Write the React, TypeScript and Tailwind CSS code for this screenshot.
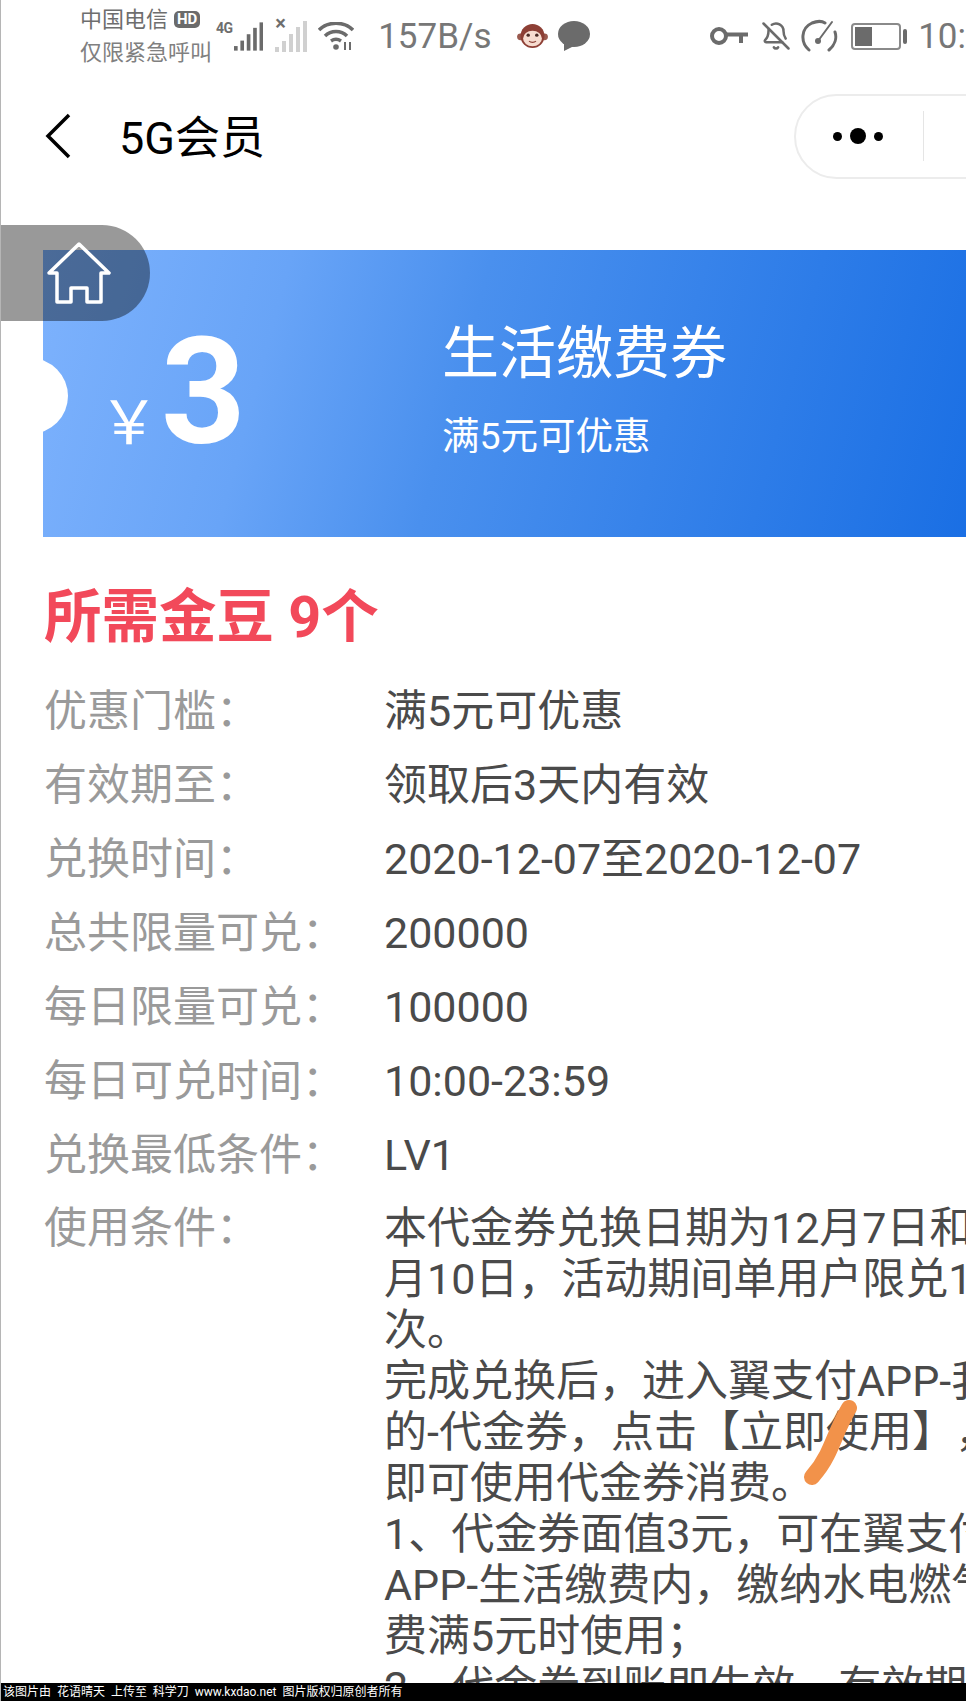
import { BellOff } from 'lucide-react';

const font = { fontFamily: 'Roboto, "Noto Sans CJK SC", sans-serif' };

const rows = [
  ['优惠门槛：', '满5元可优惠'],
  ['有效期至：', '领取后3天内有效'],
  ['兑换时间：', '2020-12-07至2020-12-07'],
  ['总共限量可兑：', '200000'],
  ['每日限量可兑：', '100000'],
  ['每日可兑时间：', '10:00-23:59'],
  ['兑换最低条件：', 'LV1'],
];

const terms = [
  '本代金券兑换日期为12月7日和12',
  '月10日，活动期间单用户限兑1',
  '次。',
  '完成兑换后，进入翼支付APP-我',
  '的-代金券，点击【立即使用】，',
  '即可使用代金券消费。',
  '1、代金券面值3元，可在翼支付',
  'APP-生活缴费内，缴纳水电燃气',
  '费满5元时使用；',
  '2、代金券到账即生效，有效期',
];

function Signal({ faded }: { faded?: boolean }) {
  const fill = faded ? '#d0d0d0' : '#6b6b6b';
  return (
    <svg className="block" width="32" height="31" viewBox="0 0 32 31">
      <rect x="0" y="26" width="4" height="5" fill={fill} />
      <rect x="7" y="20" width="4" height="11" fill={fill} />
      <rect x="14" y="13" width="4" height="18" fill={fill} />
      <rect x="21" y="6" width="4" height="25" fill={fill} />
      <rect x="28" y="0" width="4" height="31" fill={fill} />
    </svg>
  );
}

function StatusBar() {
  return (
    <div className="flex h-[85px] items-center pb-[13px] pl-[79px] text-[#6e6e6e]">
      <div className="w-[136px] shrink-0 text-[22px] leading-[33px] whitespace-nowrap">
        <div className="flex items-center gap-[6px]">
          中国电信
          <span className="rounded-[5px] bg-[#6b6b6b] px-[3px] text-[15px] leading-[17px] font-bold text-white">HD</span>
        </div>
        <div className="text-[#808080]">仅限紧急呼叫</div>
      </div>
      <span className="mb-[17px] w-[18px] shrink-0 text-[14px] leading-[14px] font-bold tracking-[-0.5px]">4G</span>
      <Signal />
      <div className="relative ml-[12px]">
        <Signal faded />
        <span className="absolute top-[-6px] left-0 text-[20px] leading-[16px] font-bold">×</span>
      </div>
      <svg className="ml-[11px] shrink-0" width="36" height="28" viewBox="0 0 36 28" fill="none" stroke="#6b6b6b" strokeWidth="3.5">
        <path d="M1 8 C10 -1 26 -1 35 8" />
        <path d="M7 14 C13 8 23 8 29 14" />
        <path d="M13 19 C16 17 20 17 23 19" />
        <circle cx="18" cy="25" r="2.8" fill="#6b6b6b" stroke="none" />
        <path d="M27 20v8M32 20v8" strokeWidth="2" />
      </svg>
      <span className="ml-[24px] w-[137px] shrink-0 text-[35px] leading-none text-[#777777]">157B/s</span>
      <svg className="shrink-0" width="35" height="24" viewBox="0 0 36 28">
        <circle cx="4" cy="15" r="4" fill="#9a5a4f" />
        <circle cx="32" cy="15" r="4" fill="#9a5a4f" />
        <circle cx="18" cy="14" r="14" fill="#8d3f35" />
        <ellipse cx="18" cy="17" rx="11" ry="9" fill="#f7dcd0" />
        <circle cx="13" cy="13" r="2" fill="#4a2b26" />
        <circle cx="23" cy="13" r="2" fill="#4a2b26" />
        <path d="M14 20 C16 22 20 22 22 20" stroke="#8d3f35" strokeWidth="1.5" fill="none" />
      </svg>
      <svg className="ml-[8px] shrink-0" width="32" height="30" viewBox="0 0 32 30">
        <ellipse cx="16" cy="13" rx="16" ry="13" fill="#6b6b6b" />
        <path d="M6 20 L6 30 L18 24 Z" fill="#6b6b6b" />
      </svg>
      <svg className="ml-[120px] shrink-0" width="38" height="18" viewBox="0 0 38 18" fill="none" stroke="#6b6b6b" strokeWidth="4">
        <circle cx="9" cy="9" r="7" />
        <path d="M16 7.5 H38 M31 7.5 V16" />
      </svg>
      <BellOff className="ml-[13px] shrink-0" size={30} strokeWidth={2} color="#6b6b6b" />
      <svg className="ml-[9px] shrink-0" width="38" height="34" viewBox="0 0 38 34" fill="none" stroke="#6b6b6b" strokeWidth="3" strokeLinecap="round">
        <path d="M9 31 C0 23 1 9 12 4 C17 2 22 2 25 4" />
        <path d="M29 31 C35 26 37 19 35 13" />
        <path d="M18 22 L32 3" strokeWidth="2" />
        <circle cx="18" cy="22" r="3" fill="#6b6b6b" stroke="none" />
      </svg>
      <div className="ml-[13px] flex shrink-0 items-center">
        <div className="h-[27px] w-[50px] rounded-[4px] border-2 border-[#8a8a8a] p-[2px]">
          <div className="h-full w-[17px] bg-[#6b6b6b]" />
        </div>
        <div className="ml-[2px] h-[15px] w-[4px] rounded-[2px] bg-[#6b6b6b]" />
      </div>
      <span className="ml-[11px] text-[35px] leading-none whitespace-nowrap text-[#777777]">10:</span>
    </div>
  );
}

function NavBar() {
  return (
    <div className="flex h-[105px] items-center pb-[3px]">
      <svg className="ml-[43px] shrink-0" width="28" height="46" viewBox="0 0 28 46" fill="none" stroke="#000" strokeWidth="3.5">
        <path d="M25 2 L4 23 L25 44" />
      </svg>
      <span className="mt-[5px] ml-[47px] text-[45px] leading-none whitespace-nowrap text-black">5G会员</span>
      <div className="mr-[-60px] ml-auto flex h-[85px] w-[232px] shrink-0 items-center rounded-full border-2 border-[#ececec] pl-[37px]">
        <div className="flex w-[50px] items-center justify-between">
          <span className="size-[9px] rounded-full bg-black" />
          <span className="size-[16px] rounded-full bg-black" />
          <span className="size-[9px] rounded-full bg-black" />
        </div>
        <div className="ml-[40px] h-[50px] w-px bg-[#e5e5e5]" />
      </div>
    </div>
  );
}

function Coupon() {
  return (
    <div className="relative mt-[60px] ml-[42px] flex h-[287px] items-center overflow-hidden bg-[linear-gradient(105deg,#7db2fd_0%,#68a4f7_25%,#4a90ee_45%,#1a6fe4_100%)] text-white">
      <div className="absolute top-[108px] left-[-51px] size-[76px] rounded-full bg-white" />
      <div className="mt-[-2px] flex w-[399px] shrink-0 items-end pl-[56px]">
        <span className="mb-[-14px] text-[60px] leading-[72px]">￥</span>
        <span className="ml-[2px] text-[148px] leading-[106px] font-bold">3</span>
      </div>
      <div className="mt-[-9px] whitespace-nowrap">
        <div className="text-[57px] leading-[72px]">生活缴费券</div>
        <div className="mt-[21px] text-[37.5px] leading-[50px]">满5元可优惠</div>
      </div>
    </div>
  );
}

function Details() {
  return (
    <div className="ml-[43px]">
      <div className="mt-[46px] mb-[21px] text-[57.5px] leading-[70px] font-bold whitespace-nowrap text-[#f2495a]">所需金豆 9个</div>
      {rows.map(([label, value]) => (
        <div key={label} className="flex h-[74px] items-center text-[43px] whitespace-nowrap">
          <div className="w-[340px] shrink-0 text-[#9a9a9a]">{label}</div>
          <div className="text-[#4a4a4a]">{value}</div>
        </div>
      ))}
      <div className="mt-[11px] flex text-[43px] leading-[51px]">
        <div className="w-[340px] shrink-0 text-[#9a9a9a]">使用条件：</div>
        <div className="whitespace-nowrap text-[#4a4a4a] [text-spacing-trim:space-all]">
          {terms.map((line) => (
            <div key={line}>{line}</div>
          ))}
        </div>
      </div>
    </div>
  );
}

export default function App() {
  return (
    <div className="relative h-[1701px] w-[966px] overflow-hidden border-l border-[#b5b5b5] bg-white" style={font}>
      <StatusBar />
      <NavBar />
      <Coupon />
      <Details />

      {/* floating home button */}
      <div className="absolute top-[225px] left-0 flex h-[96px] w-[149px] items-center rounded-r-[48px] bg-black/40 pl-[46px]">
        <svg width="64" height="62" viewBox="0 0 64 62" fill="none" stroke="#fff" strokeWidth="3.5" strokeLinejoin="round">
          <path d="M2 31 L32 2 L62 31 L54 31 L54 60 L40 60 L40 46 L24 46 L24 60 L10 60 L10 31 Z" />
        </svg>
      </div>

      {/* orange scribble */}
      <svg className="absolute top-[1397px] left-[800px]" width="60" height="90" viewBox="0 0 60 90" fill="none">
        <path d="M48 11 C38 28 33 44 26 58 C22 66 18 72 11 80" stroke="#f2924a" strokeWidth="16" strokeLinecap="round" />
      </svg>

      {/* watermark */}
      <div className="absolute right-0 bottom-0 left-[-1px] flex h-[18px] items-center bg-black pl-[3px] text-[12px] leading-none whitespace-nowrap text-white">
        该图片由&nbsp;&nbsp;花语晴天&nbsp;&nbsp;上传至&nbsp;&nbsp;科学刀&nbsp;&nbsp;www.kxdao.net&nbsp;&nbsp;图片版权归原创者所有
      </div>
    </div>
  );
}
